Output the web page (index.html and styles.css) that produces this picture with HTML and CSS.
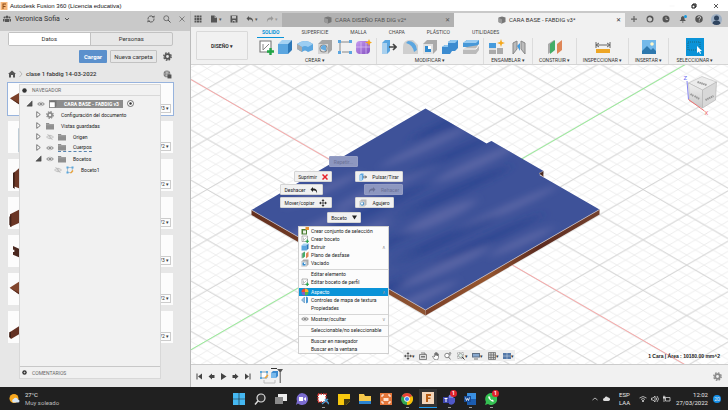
FILE: index.html
```html
<!DOCTYPE html>
<html lang="es">
<head>
<meta charset="utf-8">
<title>Autodesk Fusion 360</title>
<link rel="stylesheet" href="styles.css">
</head>
<body>
<svg class="defs" aria-hidden="true">
  <defs>
    <linearGradient id="purple" x1="0" y1="0" x2="1" y2="1"><stop offset="0" stop-color="#c79af0"/><stop offset="1" stop-color="#8450c0"/></linearGradient>
    <symbol id="gear" viewBox="0 0 16 16"><circle cx="8" cy="8" r="4.2" fill="none" stroke="currentColor" stroke-width="3.4"/><circle cx="8" cy="8" r="6.6" fill="none" stroke="currentColor" stroke-width="2.4" stroke-dasharray="2.9 2.28"/></symbol>
    <symbol id="eye" viewBox="0 0 16 16"><path d="M0 8Q8-1 16 8Q8 17 0 8Z" fill="#a2a2a2"/><circle cx="8" cy="8" r="3.4" fill="#f1f1f1"/><circle cx="8" cy="8" r="2.2" fill="#777"/></symbol>
    <symbol id="eye-off" viewBox="0 0 16 16"><path d="M1 8Q8 1 15 8Q8 15 1 8ZM3 2l10 12" fill="none" stroke="#b5b5b5" stroke-width="1.5"/><circle cx="8" cy="8" r="2.4" fill="none" stroke="#b5b5b5" stroke-width="1.3"/></symbol>
    <symbol id="folder" viewBox="0 0 16 16"><path d="M0 2h6l1 2h9v11H0z" fill="#8f8f8f"/><path d="M0 5.500h16" stroke="#b9b9b9"/></symbol>
    <symbol id="closed" viewBox="0 0 16 16"><path d="M4 1.500L12 8L4 14.500Z" fill="#fff" stroke="#444" stroke-width="1.6"/></symbol>
    <symbol id="open" viewBox="0 0 16 16"><path d="M14 2V14H2Z" fill="#555" stroke="#333"/></symbol>
    <symbol id="cube" viewBox="0 0 16 16"><path d="M1 3L8 1l7 2v9l-7 3-7-3z" fill="#777"/><path d="M8 6.500v9l-7-3V4z" fill="#999"/></symbol>
    <symbol id="box" viewBox="0 0 16 16"><path d="M1 5L5 1h10l-4 4z" fill="#a5d2f3"/><path d="M1 5h10v10H1z" fill="#5ba6e0"/><path d="M11 5l4-4v10l-4 4z" fill="#2d78b8"/></symbol>
    <symbol id="sketch" viewBox="0 0 16 16"><path d="M2 2H13V13H2Z" fill="#fff" stroke="#777" stroke-width="1.1"/><path d="M5 5v6l6-6" fill="none" stroke="#888"/><path d="M12.500 9v7M9 12.500h7" stroke="#22a547" stroke-width="2.4"/></symbol>
    <symbol id="sketch-edit" viewBox="0 0 16 16"><path d="M3 3H13L12 13H3Z" fill="none" stroke="#7c9ab0" stroke-width="1.1"/><path d="M1 1h4v4H1zM11 1h4v4h-4zM1 11h4v4H1z" fill="#58a8df"/><path d="M8 14l5-6 2 2-5 5z" fill="#f1a22e"/></symbol>
    <symbol id="undo" viewBox="0 0 16 16"><path d="M6 2L1 7l5 5V9c5-1 7 1 8 6C15 8 12 5 6 5Z" fill="currentColor"/></symbol>
    <symbol id="pushpull" viewBox="0 0 16 16"><path d="M1 4L4 1h5v11l-3 3H1z" fill="#5ba6e0"/><path d="M1 4h5v11H1z" fill="#a9d0ee"/><path d="M8 8h7M12 5l3 3-3 3" fill="none" stroke="#444" stroke-width="1.6"/></symbol>
    <symbol id="hole" viewBox="0 0 16 16"><path d="M1 5L5 1h10v10l-4 4H1z" fill="#b7b7b7"/><path d="M1 5h10v10H1z" fill="#dedede"/><circle cx="6.500" cy="9.500" r="4" fill="#4d93c8"/><circle cx="6" cy="9" r="2.300" fill="#eef6fc"/></symbol>
    <symbol id="planes" viewBox="0 0 16 16"><path d="M1 5l6-4v10l-6 4z" fill="#aaa"/><path d="M3 5l5-4v10l-5 4z" fill="#44ad68"/><path d="M10 5l5-4v10l-5 4z" fill="#df8657"/></symbol>
    <symbol id="shell" viewBox="0 0 16 16"><path d="M1 5L5 1h10v10l-4 4H1z" fill="#aaa"/><path d="M1 5h10v10H1z" fill="#e2e2e2"/><path d="M3 7h6v6H3z" fill="#318bd0"/><path d="M6 7h3v3H6z" fill="#fff"/></symbol>
  </defs>
</svg>

<header class="titlebar">
  <svg class="i8" viewBox="0 0 16 16"><path d="M1 0h14v16H1z" fill="#f6b77a"/><path d="M5 3h7v2H7v3h4v2H7v4H5z" fill="#8a4a16"/></svg>
  <span class="title">Autodesk Fusion 360 (Licencia educativa)</span>
  <button class="win" aria-label="Minimizar"><svg class="i6" viewBox="0 0 12 12"><path d="M1 6h10" stroke="#eee"/></svg></button>
  <button class="win" aria-label="Restaurar"><svg class="i6" viewBox="0 0 12 12"><path d="M2 4h6v6H2zM4 4V2h6v6H8" fill="none" stroke="#111" stroke-width="2"/></svg></button>
  <button class="win" aria-label="Cerrar"><svg class="i6" viewBox="0 0 12 12"><path d="M2 2l8 8M10 2l-8 8" stroke="#222" stroke-width="1.500"/></svg></button>
</header>

<div class="workspace">
  <aside class="data">
    <div class="user">
      <svg class="i8" viewBox="0 0 16 16"><g fill="#555"><circle cx="8" cy="4" r="3"/><circle cx="3" cy="5" r="2"/><circle cx="13" cy="5" r="2"/><path d="M4 14V8h8v6zM0 13V8h3v5zM13 8h3v5h-3z"/></g></svg>
      <span>Veronica Sofia</span>
      <svg class="i6" viewBox="0 0 12 12"><path d="M2 4l4 4 4-4" fill="none" stroke="#555" stroke-width="2"/></svg>
      <span class="grow"></span>
      <button class="plain" aria-label="Actualizar"><svg class="i8" viewBox="0 0 16 16"><path d="M2 9A6 6 0 0 1 12 3.500M14 7A6 6 0 0 1 4 12.500" fill="none" stroke="#444" stroke-width="1.600"/><path d="M10 5h5V1zM6 11H1v4z" fill="#444"/></svg></button>
      <button class="plain" aria-label="Buscar"><svg class="i8" viewBox="0 0 16 16"><circle cx="6.500" cy="6.500" r="5" fill="none" stroke="#555" stroke-width="1.500"/><path d="M10 10l5 5" stroke="#555" stroke-width="2"/></svg></button>
      <button class="plain" aria-label="Cerrar panel"><svg class="i6" viewBox="0 0 12 12"><path d="M1 1l10 10M11 1L1 11" stroke="#666" stroke-width="1.500"/></svg></button>
    </div>
    <div class="segments"><button class="on">Datos</button><button>Personas</button></div>
    <div class="actions">
      <button class="primary">Cargar</button><button class="secondary">Nueva carpeta</button>
      <button class="plain" aria-label="Ajustes"><svg class="i9"><use href="#gear"/></svg></button>
    </div>
    <div class="crumbs">
      <svg class="i8" viewBox="0 0 16 16"><path d="M8 1L0 8h2v7h4v-5h4v5h4V8h2z" fill="#555"/></svg>
      <svg class="i6" viewBox="0 0 12 12"><path d="M3 0l5 6-5 6" fill="none" stroke="#aaa" stroke-width="1.500"/></svg>
      <span>clase 1 fabdig 14-03-2022</span><span class="grow"></span>
      <svg class="i9" viewBox="0 0 16 16"><circle cx="7" cy="7" r="6" fill="#777"/><path d="M1 7h12M7 1v12M3 3q4 3 8 0M3 11q4-3 8 0" stroke="#ddd" fill="none"/><path d="M8 8h7v7H8z" fill="#555"/></svg>
    </div>
    <ul class="cards">
      <li class="sel"><svg viewBox="0 0 33 96"><path d="M6 46L33 30V64z" fill="#7a4029"/><path d="M6 46l27 14v4z" fill="#4a2418"/></svg><button>V3 ▾</button></li>
      <li><svg viewBox="0 0 33 96"><path d="M31 22h2v72h-2z" fill="#9fb4c4"/></svg><button>V2 ▾</button></li>
      <li><svg viewBox="0 0 33 96"><path d="M17 42l16-14v60l-16-6z" fill="#6b3625"/><path d="M15 42l5-4v52l-5-5z" fill="#3e2018"/></svg><button>V2 ▾</button></li>
      <li><svg viewBox="0 0 33 96"><path d="M6 52L33 38V78L6 90z" fill="#6b3625"/><path d="M4 60l6-9v40l-6-8z" fill="#43221a"/></svg><button>V2 ▾</button></li>
      <li><svg viewBox="0 0 33 96"><path d="M15 33l18 8v26l-18-8v-8h4v-7h-4z" fill="#4b281f"/></svg><button>V3 ▾</button></li>
      <li><svg viewBox="0 0 33 96"><path d="M5 44L33 26V64z" fill="#81462e"/><path d="M5 44l28 15v5z" fill="#55291c"/></svg><button>V2 ▾</button></li>
      <li><svg viewBox="0 0 33 96"><path d="M5 64L33 46V70L9 84l-5-6z" fill="#633123"/><path d="M4 64l5-2v20l-5-4z" fill="#3e2018"/></svg><button>V2 ▾</button></li>
    </ul>

    <section class="browser">
      <h2><svg class="i5" viewBox="0 0 10 10"><circle cx="5" cy="5" r="4.500" fill="#333"/></svg>NAVEGADOR</h2>
      <div class="row l0"><svg class="i7"><use href="#open"/></svg><svg class="i8"><use href="#eye"/></svg><span class="root"><svg class="i8" viewBox="0 0 16 16"><path d="M1 4l3-3h11v11l-3 3H1z" fill="#777"/><path d="M1 4h11v11H1z" fill="#fff" stroke="#666"/></svg>CARA BASE - FABDIG v3</span><svg class="i7" viewBox="0 0 14 14"><circle cx="7" cy="7" r="6" fill="#fff" stroke="#444" stroke-width="1.500"/><circle cx="7" cy="7" r="2.500" fill="#333"/></svg></div>
      <div class="row l1"><svg class="i7"><use href="#closed"/></svg><svg class="i8 dim"><use href="#gear"/></svg><span class="lbl">Configuración del documento</span></div>
      <div class="row l1"><svg class="i7"><use href="#closed"/></svg><svg class="i8"><use href="#folder"/></svg><span class="lbl">Vistas guardadas</span></div>
      <div class="row l1"><svg class="i7"><use href="#closed"/></svg><svg class="i8"><use href="#eye-off"/></svg><svg class="i8"><use href="#folder"/></svg><span class="lbl">Origen</span></div>
      <div class="row l1"><svg class="i7"><use href="#closed"/></svg><svg class="i8"><use href="#eye"/></svg><span class="dashed"><svg class="i8"><use href="#folder"/></svg><span class="lbl">Cuerpos</span></span></div>
      <div class="row l1"><svg class="i7"><use href="#open"/></svg><svg class="i8"><use href="#eye"/></svg><svg class="i8"><use href="#folder"/></svg><span class="lbl">Bocetos</span></div>
      <div class="row l2"><svg class="i8"><use href="#eye-off"/></svg><svg class="i8"><use href="#sketch-edit"/></svg><span class="lbl">Boceto1</span></div>
      <h2 class="comments"><svg class="i5" viewBox="0 0 10 10"><circle cx="5" cy="5" r="4.500" fill="#333"/><path d="M3 5h4M5 3v4" stroke="#fff"/></svg>COMENTARIOS</h2>
    </section>
  </aside>

  <main class="design">
    <div class="docbar">
      <div class="quick">
        <svg class="i8" viewBox="0 0 16 16"><path d="M3 1v14M8 1v14M13 1v14" stroke="#555" stroke-width="4" stroke-dasharray="4 1"/></svg>
        <span><svg class="i8" viewBox="0 0 16 16"><path d="M2 1h7l5 5v9H2z" fill="#555"/><path d="M9 1v5h5" fill="#aaa"/></svg>▾</span>
        <svg class="i8" viewBox="0 0 16 16"><path d="M1 1h14v14H1z" fill="#555"/><path d="M4 2h8v5H4zM5 10h6v5H5z" fill="#c4c4c4"/><path d="M6 12h3v3H6z" fill="#555"/></svg>
        <span><svg class="i8"><use href="#undo"/></svg>▾</span>
        <span class="off"><svg class="i8 flip"><use href="#undo"/></svg>▾</span>
      </div>
      <div class="doc"><span class="name"><svg class="i8"><use href="#cube"/></svg>CARA DISEÑO FAB DIG v2*</span><button class="plain" aria-label="Cerrar documento">✕</button></div>
      <div class="doc active"><span class="name"><svg class="i8"><use href="#cube"/></svg>CARA BASE - FABDIG v3*</span><button class="plain" aria-label="Cerrar documento">✕</button></div>
      <div class="tools">
        <svg class="i8" viewBox="0 0 16 16"><path d="M8 2v12M2 8h12" stroke="#666" stroke-width="2.500"/></svg>
        <svg class="i8" viewBox="0 0 16 16"><circle cx="8" cy="8" r="7" fill="#555"/><path d="M5 5a4.500 4.500 0 1 0 7 2L8 4z" fill="#ccc"/></svg>
        <svg class="i8" viewBox="0 0 16 16"><circle cx="8" cy="8" r="7" fill="#555"/><path d="M8 4v5h4" stroke="#ccc" stroke-width="1.500" fill="none"/></svg>
        <svg class="i8" viewBox="0 0 16 16"><path d="M1 12l3-3V5q4-6 7 0v4l3 3zM6 13h3v2H6z" fill="#555"/><circle cx="13" cy="3" r="3" fill="#169ae0"/></svg>
        <svg class="i8" viewBox="0 0 16 16"><circle cx="8" cy="8" r="7.500" fill="#555"/><path d="M5.500 6q0-3 3-3t2.500 3q0 1-2.500 3v1M8.500 11v2" stroke="#ddd" stroke-width="1.700" fill="none"/></svg>
        <svg class="i11" viewBox="0 0 22 22"><circle cx="11" cy="11" r="11" fill="#9fb0c4"/><circle cx="11" cy="8" r="5" fill="#30455f"/><path d="M3 19q1-6 8-6t8 6q-8 6-16 0z" fill="#30455f"/></svg>
      </div>
    </div>

    <div class="ribbon">
      <button class="mode">DISEÑO ▾</button>
      <div class="panels">
        <nav class="tabs"><a href="#" class="on">SOLIDO</a><a href="#">SUPERFICIE</a><a href="#">MALLA</a><a href="#">CHAPA</a><a href="#">PLÁSTICO</a><a href="#">UTILIDADES</a></nav>
        <div class="groups">
          <div class="group"><div class="icons">
            <svg><use href="#sketch"/></svg><svg><use href="#box"/></svg>
            <svg viewBox="0 0 16 16"><path d="M0 5Q8-1 16 5v6l-5 2q-3-3-6 0L0 10z" fill="#5ba6e0"/><path d="M0 5Q8-1 16 5l-5 3q-3-2-6 0z" fill="#9bcdf2"/><path d="M0 5l5 3v5l-5-3z" fill="#aaa"/></svg>
            <svg viewBox="0 0 16 16"><path d="M1 5L5 1h10v10l-4 4H1z" fill="#a5a5a5"/><path d="M1 5h10v10H1z" fill="#d5d5d5"/><circle cx="6.500" cy="9.500" r="4" fill="#888"/><circle cx="6.500" cy="9.500" r="3" fill="#e6e6e6"/><path d="M4 10a3 3 0 0 1 5-3v5z" fill="#65abe0"/></svg>
            <svg viewBox="0 0 16 16"><path d="M3 13V3H13M5 13h8" stroke="#888" fill="none"/><path d="M1 1h3v3H1zM12 1h3v3h-3zM1 12h3v3H1zM12 12h3v3h-3z" fill="#5ba6e0"/></svg>
            <svg viewBox="0 0 16 16"><rect y="2" width="14" height="13" rx="4" fill="url(#purple)"/><path d="M0 8h14M5 3v12M10 3v12" stroke="#dcc4f5" stroke-width=".7"/><path d="M13 0l1 2.500 2 1-2 1-1 2.500-1-2.500-3-1 3-1z" fill="#f5a81c"/></svg>
          </div><button>CREAR ▾</button></div>
          <div class="group"><div class="icons">
            <svg><use href="#pushpull"/></svg>
            <svg viewBox="0 0 16 16"><path d="M1 15V8q0-7 7-7h3l5 5v9z" fill="#cfcfcf"/><path d="M6 2q8 0 9 9l-3 2Q11 6 4 4z" fill="#5ba6e0"/></svg>
            <svg><use href="#shell"/></svg>
            <svg viewBox="0 0 16 16"><path d="M0 8l3-2h3V3l3-2h7v8l-3 3h-3l-2 3H0z" fill="#3c8bd0"/><path d="M0 8h6V4h7l3-3H9L6 3v3H3z" fill="#8fc7f0"/></svg>
            <svg viewBox="0 0 16 16"><path d="M0 4l4-3h12v4l-3 3H0z" fill="#4798d8"/><path d="M0 4l4-3h12l-3 3z" fill="#99cbf1"/><path d="M0 10l4-2 12-2v5l-3 4H0z" fill="#bbb"/><path d="M0 10h13l3-4" stroke="#fff" fill="none"/></svg>
          </div><button>MODIFICAR ▾</button></div>
          <div class="group"><div class="icons">
            <svg viewBox="0 0 16 16"><path d="M0 4h7v5H0z" fill="#469bdd"/><path d="M0 9h7v6H0zM8 9h6v6H8z" fill="#aaa"/><path d="M0 9h7v2H0z" fill="#ddd"/><path d="M12 0l1 3 3 1-3 1-1 3-1-3-3-1 3-1z" fill="#f5a81c"/></svg>
            <svg viewBox="0 0 16 16"><path d="M2 4l4-2v8l-4 5zM10 2l4 2v11l-4-5z" fill="#bbb" stroke="#888"/><path d="M6 7l3-3v8z" fill="#469bdd"/></svg>
          </div><button>ENSAMBLAR ▾</button></div>
          <div class="group"><div class="icons"><svg><use href="#planes"/></svg></div><button>CONSTRUIR ▾</button></div>
          <div class="group"><div class="icons"><svg viewBox="0 0 16 16"><path d="M1 3v6M15 3v6M1 6h14M4 4L1 6l3 2M12 4l3 2-3 2" stroke="#666" fill="none"/><path d="M1 10h14v4H1z" fill="#eda626"/></svg></div><button>INSPECCIONAR ▾</button></div>
          <div class="group"><div class="icons"><svg viewBox="0 0 16 16"><path d="M1 1h14v14H1z" fill="#74b9ea"/><path d="M1 12l5-5 4 4 2-2 3 3v3H1z" fill="#2d77ad"/><circle cx="11" cy="5" r="1.800" fill="#fff6c8"/></svg></div><button>INSERTAR ▾</button></div>
          <div class="group"><div class="icons"><svg class="big" viewBox="0 0 18 18"><path d="M0 0h18v18H0z" fill="#0a93d8"/><path d="M2 4h12v8H2z" fill="none" stroke="#1c5d6b" stroke-width=".8" stroke-dasharray="1 1"/><path d="M11 8v7l2-1.500 1 2.500 1-.5-1-2.500h2z" fill="#fff"/></svg></div><button>SELECCIONAR ▾</button></div>
        </div>
      </div>
    </div>

    <div class="canvas">
      <svg class="scene" viewBox="190 65 538 299" preserveAspectRatio="xMidYMid slice">
        <defs>
          <pattern id="minor" patternUnits="userSpaceOnUse" x="424.6" y="214.7" width="17.44" height="10.08"><path d="M0 0L17.44 10.08M0 10.08L17.44 0" stroke="#e9e9e9" stroke-width=".8"/></pattern>
          <pattern id="major" patternUnits="userSpaceOnUse" x="424.6" y="214.7" width="87.2" height="50.4"><path d="M0 0L87.2 50.400M0 50.400L87.2 0" stroke="#ccc" stroke-width=".8"/></pattern>
          <linearGradient id="edgeR"><stop offset="0" stop-color="#7a3f28"/><stop offset=".35" stop-color="#96562f"/><stop offset=".65" stop-color="#5c2b20"/><stop offset="1" stop-color="#74412e"/></linearGradient>
          <linearGradient id="edgeL"><stop offset="0" stop-color="#64301f"/><stop offset="1" stop-color="#8f5432"/></linearGradient>
          <clipPath id="top"><path d="M425 108.500L486 143.500L491 141L543 171V174L539 175L599 209.500L425 310L251 210Z"/></clipPath>
          <filter id="soft" x="-50%" y="-100%" width="200%" height="300%"><feGaussianBlur stdDeviation="6 3"/></filter>
          <linearGradient id="cubeL" x2="0" y2="1"><stop stop-color="#f0f0f0"/><stop offset="1" stop-color="#c9c9c9"/></linearGradient>
        </defs>
        <path d="M190 65h538v299H190z" fill="#fff"/>
        <path d="M190 65h538v299H190z" fill="url(#minor)"/>
        <path d="M190 65h538v299H190z" fill="url(#major)"/>
        <path d="M190 79.300L728 389.700" stroke="#ff9a9a" stroke-width=".8"/>
        <path d="M190 350L728 39.600" stroke="#86f286" stroke-width=".8"/>
        <path d="M251 210L425 310V315.500L251 215Z" fill="url(#edgeL)"/>
        <path d="M599 209.500L425 310V315.500L599 214.500Z" fill="url(#edgeR)"/>
        <g clip-path="url(#top)">
          <path d="M240 100h370v220H240z" fill="#3e5299"/>
          <g transform="rotate(-24 425 210)" filter="url(#soft)">
            <g fill="#7077b0" opacity=".5">
              <ellipse cx="450" cy="152" rx="48" ry="4"/><ellipse cx="400" cy="172" rx="60" ry="5"/><ellipse cx="490" cy="188" rx="45" ry="5"/><ellipse cx="370" cy="205" rx="55" ry="4"/><ellipse cx="435" cy="222" rx="40" ry="6"/><ellipse cx="500" cy="242" rx="55" ry="4"/><ellipse cx="350" cy="245" rx="50" ry="5"/><ellipse cx="420" cy="270" rx="48" ry="5"/><ellipse cx="380" cy="288" rx="45" ry="4"/><ellipse cx="320" cy="180" rx="40" ry="4"/><ellipse cx="500" cy="278" rx="35" ry="4"/><ellipse cx="340" cy="150" rx="40" ry="4"/>
            </g>
            <g fill="#27428e" opacity=".6">
              <ellipse cx="470" cy="170" rx="60" ry="4"/><ellipse cx="380" cy="188" rx="60" ry="4"/><ellipse cx="450" cy="205" rx="70" ry="5"/><ellipse cx="350" cy="225" rx="60" ry="4"/><ellipse cx="420" cy="245" rx="70" ry="5"/><ellipse cx="470" cy="262" rx="60" ry="4"/><ellipse cx="340" cy="266" rx="40" ry="5"/><ellipse cx="490" cy="140" rx="50" ry="5"/>
            </g>
          </g>
        </g>
        <path d="M538.500 173.500l4.500-2.500v6z" fill="#4a2a1e" stroke="#d5c4bb" stroke-width=".5"/>
        <path d="M251 210L425 310L599 209.500" fill="none" stroke="#c8bdbf" stroke-width=".8"/>
        <g>
          <path d="M688 83l13.500-6.500L716 82l-14 8z" fill="#ececec" stroke="#bbb" stroke-width=".6"/>
          <path d="M688 83l14 7v18l-13-7z" fill="url(#cubeL)" stroke="#b5b5b5" stroke-width=".6"/>
          <path d="M702 90l14-8-1 18-13 8z" fill="#d8d8d8" stroke="#b0b0b0" stroke-width=".6"/>
          <path d="M690 94l3 2M694 96l5 3M705 100l8-4M697 82l9 3" stroke="#999" stroke-width="2" stroke-dasharray="1.500 .5"/>
          <path d="M686.500 81L688 99.500" stroke="#8484f0"/><path d="M688 99.500L704 111" stroke="#ef7070"/>
          <text x="683" y="80" class="axis" fill="#7070f0">Z</text><text x="704" y="115" class="axis" fill="#f07070">X</text>
        </g>
      </svg>

      <button class="mark repetir ghost">Repetir...</button>
      <button class="mark suprimir">Suprimir <svg class="i6" viewBox="0 0 12 12"><path d="M1 1l10 10M11 1L1 11" stroke="#e8222a" stroke-width="3"/></svg></button>
      <button class="mark pulsar"><svg class="i8"><use href="#pushpull"/></svg> Pulsar/Tirar</button>
      <button class="mark deshacer">Deshacer <svg class="i8"><use href="#undo"/></svg></button>
      <button class="mark rehacer ghost"><svg class="i8 flip"><use href="#undo"/></svg> Rehacer</button>
      <button class="mark mover">Mover/copiar <svg class="i8" viewBox="0 0 16 16"><path d="M8 2v12M2 8h12" stroke="#333" stroke-width="1.500"/><path d="M5 4l3-4 3 4zM5 12l3 4 3-4zM4 5L0 8l4 3zM12 5l4 3-4 3z" fill="#333"/></svg></button>
      <button class="mark agujero"><svg class="i8"><use href="#hole"/></svg> Agujero</button>
      <button class="mark boceto">Boceto <svg class="i5" viewBox="0 0 10 10"><path d="M0 1h10L5 9z" fill="#222"/></svg></button>

      <menu class="context">
        <li><svg class="i8" viewBox="0 0 16 16"><path d="M1 4h11v11H1z" fill="#4a7c32"/><path d="M4 7h6v6H4z" fill="#e9efe4"/><path d="M9 0h7v6H9z" fill="#e89432"/></svg><button>Crear conjunto de selección</button></li>
        <li><svg class="i8"><use href="#sketch"/></svg><button>Crear boceto</button></li>
        <li><svg class="i8"><use href="#box"/></svg><button>Extruir</button><i>∧</i></li>
        <li><svg class="i8"><use href="#planes"/></svg><button>Plano de desfase</button></li>
        <li><svg class="i8"><use href="#shell"/></svg><button>Vaciado</button></li>
        <li class="line"><button>Editar elemento</button></li>
        <li><svg class="i8"><use href="#sketch"/></svg><button>Editar boceto de perfil</button></li>
        <li class="hot"><svg class="i8" viewBox="0 0 16 16"><path d="M8 8V1a7 7 0 0 1 7 7z" fill="#f7b52a"/><path d="M8 8h7a7 7 0 0 1-7 7z" fill="#58b947"/><path d="M8 8v7a7 7 0 0 1-7-7z" fill="#7d62c8"/><path d="M8 8H1a7 7 0 0 1 7-7z" fill="#ec4a3a"/></svg><button>Aspecto</button><i>∧</i></li>
        <li><svg class="i8" viewBox="0 0 16 16"><path d="M1 8l6-6v12z" fill="#90bee2" stroke="#4382b5"/><path d="M10 1l4 2v10l-4 2z" fill="#4a96d2"/></svg><button>Controles de mapa de textura</button></li>
        <li><button>Propiedades</button></li>
        <li class="line"><svg class="i8"><use href="#eye"/></svg><button>Mostrar/ocultar</button><i>∨</i></li>
        <li class="line"><button>Seleccionable/no seleccionable</button></li>
        <li class="line"><button>Buscar en navegador</button></li>
        <li><button>Buscar en la ventana</button></li>
      </menu>

      <div class="viewbar">
        <span><svg class="i8" viewBox="0 0 16 16"><path d="M8 2v12M1 8h14" stroke="#555" stroke-width="1.500"/><path d="M5 4l3-4 3 4zM5 12l3 4 3-4zM4 5L0 8l4 3zM12 5l4 3-4 3z" fill="#555"/></svg>▾</span>
        <svg class="i8" viewBox="0 0 16 16"><path d="M1 5h14v10H1zM4 2h8v3" fill="#ddd" stroke="#666" stroke-width="1.500"/><path d="M4 8h8v3H4z" fill="#777"/></svg>
        <svg class="i8" viewBox="0 0 16 16"><path d="M5 15L1 9l2-1 2 2V3h2v4-6h2v6-5h2v6-4h2v7l-2 5z" fill="#fff" stroke="#555" stroke-width="1.200"/></svg>
        <svg class="i8" viewBox="0 0 16 16"><circle cx="6" cy="7" r="4.500" fill="#fff" stroke="#666" stroke-width="1.500"/><path d="M9 10l4 5M12 1v6M10 3l2-2 2 2" stroke="#555" stroke-width="1.500" fill="none"/></svg>
        <span><svg class="i8" viewBox="0 0 16 16"><path d="M1 1h12v12H1z" fill="none" stroke="#777" stroke-dasharray="2 1"/><circle cx="7" cy="7" r="4" fill="#dfeee8" stroke="#666"/><path d="M10 10l5 5" stroke="#444" stroke-width="2"/></svg>▾</span>
        <span><svg class="i8" viewBox="0 0 16 16"><path d="M0 2h16v9H0z" fill="#5d6f86"/><path d="M2 4h12v5H2z" fill="#88a9d0"/><path d="M4 13h8v2H4z" fill="#777"/></svg>▾</span>
        <span><svg class="i8" viewBox="0 0 16 16"><path d="M1 1h14v14H1z" fill="#ccc"/><path d="M1 1h14v14H1zM6 1v14M11 1v14M1 6h14M1 11h14" fill="none" stroke="#666" stroke-width="1.400"/></svg>▾</span>
        <span><svg class="i8" viewBox="0 0 16 16"><path d="M0 2h16v12H0z" fill="#5478a8"/><path d="M8 2v12M0 8h16" stroke="#d6e1ee"/></svg>▾</span>
      </div>
      <div class="area">1 Cara | Área : 10180.00 mm^2</div>
    </div>

    <div class="timeline">
      <button class="plain" aria-label="Inicio"><svg class="i7" viewBox="0 0 14 14"><path d="M2 1v12" stroke="#444" stroke-width="2"/><path d="M12 1v12L4 7z" fill="#444"/></svg></button>
      <button class="plain" aria-label="Anterior"><svg class="i7" viewBox="0 0 14 14"><path d="M8 1v12L1 7zM8 4h5v6H8z" fill="#444"/></svg></button>
      <button class="plain" aria-label="Reproducir"><svg class="i7" viewBox="0 0 14 14"><path d="M2 0v14l11-7z" fill="#444"/></svg></button>
      <button class="plain" aria-label="Siguiente"><svg class="i7" viewBox="0 0 14 14"><path d="M6 1v12l7-6zM1 4h5v6H1z" fill="#444"/></svg></button>
      <button class="plain" aria-label="Final"><svg class="i7" viewBox="0 0 14 14"><path d="M12 1v12" stroke="#444" stroke-width="2"/><path d="M2 1v12l8-6z" fill="#444"/></svg></button>
      <svg class="feat" viewBox="0 0 26 18"><path d="M2 5h6v6H2z" fill="#fff" stroke="#7c9ab0"/><path d="M1 4h2v2H1zM7 4h2v2H7zM1 10h2v2H1z" fill="#58a8df"/><path d="M6 11l3-3" stroke="#f1a22e" stroke-width="1.500"/><path d="M12 6l2-2h5v5l-2 2h-5z" fill="#3c8bd0"/><path d="M12 6h5v5h-5z" fill="#79b9eb"/><path d="M12 2l1-1 1 1 1-1 1 1 1-1 1 1" stroke="#333" fill="none"/><path d="M18 2h6l-2 3h-.3v11h-1V5z" fill="#555"/><path d="M5 13v3h11v-3" fill="none" stroke="#bbb"/></svg>
      <span class="grow"></span>
      <svg class="i9 dim"><use href="#gear"/></svg>
    </div>
  </main>
</div>

<footer class="taskbar">
  <div class="weather"><svg class="i11" viewBox="0 0 22 22"><circle cx="10" cy="11" r="9" fill="#f7a71e"/><path d="M8 19a4 4 0 0 1 1-7 5 5 0 0 1 9 1 3 3 0 0 1 0 6z" fill="#d7e6f5"/></svg><div>27°C<br><span>Muy soleado</span></div></div>
  <div class="apps">
    <svg viewBox="0 0 12 12"><path d="M0 0h5.700v5.700H0zM6.300 0H12v5.700H6.300zM0 6.300h5.700V12H0zM6.300 6.300H12V12H6.300z" fill="#45b8f2"/></svg>
    <svg viewBox="0 0 12 12"><circle cx="7" cy="5" r="4" fill="#333" stroke="#ddd" stroke-width="1.200"/><path d="M4 8l-3 3.500" stroke="#ddd" stroke-width="1.500"/></svg>
    <svg viewBox="0 0 12 12"><path d="M3 1h9v7H3z" fill="#eee"/><path d="M0 4h8v7H0z" fill="#8a8a8a"/></svg>
    <svg viewBox="0 0 12 12"><path d="M6 0a6 6 0 1 1-4 10.500L0 12l1-4A6 6 0 0 1 6 0z" fill="#7b6cd0"/><path d="M3 4h4v4H3zM7.500 6L10 4v4z" fill="#fff"/></svg>
    <span class="run"><svg viewBox="0 0 12 12"><path d="M1 1h8v8H1z" fill="#fff" stroke="#d8322d" stroke-width="1.500" stroke-dasharray="1.500 1"/><path d="M5 11l6-5M8 6l4 5" stroke="#4b9bd0" stroke-width="1.500"/></svg></span>
    <svg viewBox="0 0 12 12"><path d="M0 1h12v7l-4 4H0z" fill="#f7c80e"/><path d="M6 6h6v2l-4 4H6z" fill="#433a10"/></svg>
    <svg viewBox="0 0 12 12"><path d="M0 1h5l1 2h6v8H0z" fill="#f6c84b"/><path d="M0 8h12v3H0z" fill="#2b83cf"/></svg>
    <svg viewBox="0 0 12 12"><path d="M0 0h12v12H0z" fill="#e3763a"/><path d="M2 4V2h2M8 2h2v2M10 8v2H8M4 10H2V8" stroke="#fff" fill="none"/><path d="M3.500 5h5v3h-5z" fill="#ffe2cf"/></svg>
    <span class="run"><svg viewBox="0 0 12 12"><circle cx="6" cy="6" r="6" fill="#34a853"/><path d="M6 6L.8 3A6 6 0 0 1 11.200 3z" fill="#ea4335"/><path d="M6 6l5.200-3A6 6 0 0 1 6 12z" fill="#fbbc05"/><circle cx="6" cy="6" r="2.800" fill="#fff"/><circle cx="6" cy="6" r="2.100" fill="#4285f4"/></svg></span>
    <span class="current"><svg viewBox="0 0 12 12"><path d="M0 0h12v12H0z" fill="#f3d5b8"/><path d="M4 2h5v2H6v1.500h2.500v1.500H6V10H4z" fill="#b75d14"/></svg></span>
    <span class="run"><svg viewBox="0 0 12 12"><circle cx="8" cy="4" r="2.500" fill="#7b83eb"/><path d="M5 5h7v4q-2 4-6 2z" fill="#5059c9"/><path d="M0 4h6v6H0z" fill="#3d46ad"/><path d="M1.500 5.500h3M3 5.500V9" stroke="#fff"/></svg><b>1</b></span>
    <span class="run"><svg viewBox="0 0 12 12"><path d="M3 0h9v12H3z" fill="#3a8fe0"/><path d="M3 6h9v6H3z" fill="#1b5cb0"/><path d="M0 3h7v6H0z" fill="#174a94"/><path d="M1.500 4.500l1 3 1-2 1 2 1-3" fill="none" stroke="#fff" stroke-width=".8"/></svg></span>
    <span class="run"><svg viewBox="0 0 12 12"><path d="M6 0a6 6 0 1 1-3 11L0 12l1-3A6 6 0 0 1 6 0z" fill="#35c052"/><path d="M4 3q-2 1 1 4t4 1l-1.500-1.500-1 .5-1.500-2 .5-.5z" fill="#fff"/></svg><b>1</b></span>
  </div>
  <div class="tray">
    <svg class="i6" viewBox="0 0 12 12"><path d="M1 8l5-4 5 4" fill="none" stroke="#ddd" stroke-width="1.500"/></svg>
    <svg class="i7" viewBox="0 0 14 14"><path d="M3 12a3 3 0 0 1 0-6q3-5 7-1a3.500 3.500 0 0 1 1 7z" fill="#ddd"/></svg>
    <div class="mid">ESP<br>LAA</div>
    <div class="status"><svg class="i8" viewBox="0 0 16 16"><path d="M1 6q7-6 14 0M4 9q4-4 8 0" fill="none" stroke="#ddd" stroke-width="1.500"/><circle cx="8" cy="12" r="2" fill="#ddd"/></svg><svg class="i8" viewBox="0 0 16 16"><path d="M1 6h3l4-4v12l-4-4H1zM10 5q3 3 0 6M12 2q6 6 0 12" fill="none" stroke="#ddd" stroke-width="1.500"/></svg><svg class="i8" viewBox="0 0 16 16"><path d="M5 5h9v7H5zM2 1v5M2 6v8" fill="none" stroke="#ddd" stroke-width="1.500"/><path d="M0 3h5v4H0z" fill="#ddd"/></svg></div>
    <div class="clock">12:02<br>27/03/2022</div>
    <span class="count">20</span>
  </div>
</footer>
</body>
</html>
```
FILE: styles.css
```css
* { box-sizing: border-box; }
body {
  margin: 0;
  height: 100vh;
  display: flex;
  flex-direction: column;
  overflow: hidden;
  font: 5px/8px Roboto, "Liberation Sans", sans-serif;
  color: #333;
  background: #e7e7e7;
}
button { font: inherit; color: inherit; background: none; border: 0; padding: 0; margin: 0; white-space: nowrap; }
svg { flex: none; display: block; }
ul, menu { list-style: none; margin: 0; padding: 0; }
.defs { position: absolute; width: 0; height: 0; }
.i5 { width: 5px; height: 5px; }
.i6 { width: 6px; height: 6px; }
.i7 { width: 7px; height: 7px; }
.i8 { width: 8px; height: 8px; }
.i9 { width: 9px; height: 9px; }
.i11 { width: 11px; height: 11px; }
.grow { flex: 1; }
.dim { color: #8a8a8a; }
.flip { transform: scaleX(-1); }
.plain { display: flex; align-items: center; }

.titlebar { flex: none; height: 11px; display: flex; align-items: center; background: #fff; padding: 0 9px 0 0; }
.title { flex: 1; font-family: "Liberation Sans", sans-serif; font-size: 6px; color: #111; padding-left: 2px; }
.win { margin-left: 16px; }

.workspace { flex: 1; min-height: 0; display: flex; }

.data { position: relative; flex: none; width: 191px; border-right: 1px solid #bbb; background: #e7e7e7; }
.user { height: 20px; display: flex; align-items: center; gap: 4px; padding: 0 5px 4px 3px; background: #c9c9c9; font-size: 7px; }
.user .plain { margin-left: 4px; }
.segments { display: grid; grid-template-columns: 1fr 1fr; height: 14px; margin: 1px 17px 0 8px; border: 1px solid #c2c2c2; border-radius: 2px; font-size: 6px; }
.segments .on { background: #fff; border-right: 1px solid #c2c2c2; }
.actions { display: flex; justify-content: flex-end; gap: 3px; height: 13px; margin: 4px 18px 0 8px; font-size: 6px; }
.actions .plain { margin-left: 3px; color: #555; }
.primary { width: 28px; background: #5b90cc; color: #fff; font-weight: bold; border-radius: 1px; }
.secondary { width: 47px; border: 1px solid #c2c2c2; border-radius: 1px; }
.crumbs { display: flex; align-items: center; gap: 2px; height: 20px; margin: 1px 18px 0 8px; font-size: 6px; font-weight: 500; }
.cards { display: grid; gap: 6px; margin: -1px 17px 0 8px; }
.cards li { display: flex; justify-content: space-between; align-items: flex-end; height: 32px; background: #fcfcfc; }
.cards li svg { width: 11px; height: 32px; }
.cards li button { height: 9px; margin: 0 2px 2px; padding: 0 1px; border: 1px solid #ccc; line-height: 7px; }
.cards .sel { outline: 1px solid #97b3dd; }

.browser { position: absolute; left: 19px; top: 73px; bottom: 8px; width: 142px; display: flex; flex-direction: column; background: #f1f1f1; border: 1px solid #d8d8d8; }
.browser h2 { display: flex; align-items: center; gap: 5px; height: 11px; margin: 0 0 2px; padding-left: 2px; font-size: 5px; font-weight: 400; color: #666; border-bottom: 1px solid #d8d8d8; }
.browser .comments { height: 12px; margin: auto 0 0; border-top: 1px solid #c8c8c8; border-bottom: 0; }
.row { display: flex; align-items: center; gap: 4px; height: 11px; color: #222; }
.l0 { padding-left: 6px; }
.l1 { padding-left: 15px; }
.l2 { padding-left: 34px; }
.lbl { padding-left: 3px; }
.root { display: flex; align-items: center; gap: 7px; height: 8px; padding-right: 4px; background: #8d8d8d; color: #fff; font-weight: bold; }
.dashed { display: flex; align-items: center; gap: 4px; border-bottom: 1px dashed #5583b0; }

.design { flex: 1; min-width: 0; display: flex; flex-direction: column; }
.docbar { flex: none; height: 16px; display: flex; background: #c9c9c9; }
.quick { flex: none; width: 91px; display: flex; align-items: center; justify-content: space-between; padding: 0 4px 0 3px; color: #555; }
.quick span { display: flex; align-items: center; gap: 1px; }
.quick .off { color: #999; }
.doc { flex: 1; display: flex; align-items: center; margin-top: 2px; padding: 0 4px; background: #b1b1b1; color: #555; font-size: 6px; }
.name { flex: 1; display: flex; align-items: center; justify-content: center; gap: 3px; }
.active { background: #f1f1f1; color: #333; }
.tools { flex: none; width: 103px; display: flex; align-items: center; justify-content: space-between; padding: 0 6px 0 5px; }

.ribbon { flex: none; height: 38px; display: flex; padding: 0 7px 0 5px; background: #f1f1f1; border-bottom: 1px solid #d4d4d4; }
.mode { flex: none; width: 52px; height: 29px; margin: 4px 6px 0 0; border: 1px solid #d9d9d9; font-weight: bold; border-radius: 1px; }
.panels { flex: 1; min-width: 0; display: flex; flex-direction: column; }
.tabs { display: flex; gap: 12px; height: 11px; padding-left: 3px; }
.tabs a { color: #444; text-decoration: none; padding: 0 5px; line-height: 10px; }
.tabs .on { color: #0a93d8; font-weight: bold; border-bottom: 1px solid #0a93d8; }
.groups { flex: 1; display: grid; grid-template-columns: 123fr 107fr 49fr 44fr 52fr 40fr 52fr; }
.group { display: flex; flex-direction: column; align-items: center; min-width: 0; border-right: 1px solid #dcdcdc; }
.group:last-child { border: 0; }
.icons { align-self: stretch; display: flex; justify-content: space-evenly; align-items: center; height: 18px; }
.icons svg { width: 16px; height: 16px; }
.icons .big { width: 18px; height: 18px; }
.group button { line-height: 8px; }

.canvas { position: relative; flex: 1; min-height: 0; background: #fff; overflow: hidden; }
.scene { position: absolute; inset: 0; width: 100%; height: 100%; }
.axis { font: 6px Roboto, sans-serif; }

.mark { position: absolute; display: flex; align-items: center; justify-content: center; gap: 5px; height: 11px; background: #f1f1f1; border: 1px solid #d5d5d5; border-radius: 1px; color: #222; }
.ghost { background: #8d97c0; border-color: #949dc4; color: #6a7196; }
.repetir { left: 138px; top: 91px; width: 29px; }
.suprimir { left: 103px; top: 106px; width: 38px; }
.pulsar { left: 164px; top: 106px; width: 48px; }
.deshacer { left: 89px; top: 119px; width: 43px; }
.rehacer { left: 173px; top: 119px; width: 39px; }
.mover { left: 89px; top: 132px; width: 52px; }
.agujero { left: 164px; top: 132px; width: 39px; }
.boceto { left: 136px; top: 147px; width: 34px; }

.context { position: absolute; left: 107px; top: 161px; width: 91px; background: #fcfcfc; border: 1px solid #d0d0d0; color: #222; }
.context li { display: grid; grid-template-columns: 12px 1fr 6px; align-items: center; height: 8px; }
.context li svg { grid-column: 1; margin-left: 2px; }
.context button { grid-column: 2; text-align: left; line-height: 8px; }
.context i { font-style: normal; color: #999; }
.context .line { margin-top: 2px; border-top: 1px solid #d6d6d6; height: 9px; }
.context .hot { margin-top: 2px; background: #0a93d8; color: #fff; }

.viewbar { position: absolute; left: 212px; bottom: 3px; width: 112px; height: 11px; display: flex; align-items: center; justify-content: space-between; padding: 0 1px; background: #eee; }
.viewbar span { display: flex; align-items: center; }
.area { position: absolute; right: 8px; bottom: 4px; font-family: "Liberation Sans", sans-serif; font-size: 5px; font-weight: bold; color: #222; }

.timeline { flex: none; height: 23px; display: flex; align-items: center; gap: 5px; padding: 0 6px 0 5px; background: #f1f1f1; border-top: 1px solid #ccc; }
.feat { width: 26px; height: 18px; margin-left: 3px; }

.taskbar { flex: none; height: 23px; display: grid; grid-template-columns: 1fr auto 1fr; align-items: center; padding: 0 7px 0 9px; background: #202020; color: #e8e8e8; font-size: 6px; line-height: 8px; }
.weather { display: flex; align-items: center; gap: 5px; }
.weather span { color: #bbb; }
.apps { display: flex; align-items: center; gap: 9px; }
.apps svg { width: 12px; height: 12px; }
.run { position: relative; padding: 3px 0; background: linear-gradient(#999, #999) center bottom / 3px 1px no-repeat; }
.run b { position: absolute; top: 0; right: -2px; width: 7px; height: 7px; border-radius: 50%; background: #e0222c; color: #fff; font-size: 5px; line-height: 7px; text-align: center; }
.current { padding: 3px; margin: 0 -3px; background: #333; border-bottom: 1px solid #1d9bf0; }
.tray { display: flex; align-items: center; justify-content: flex-end; gap: 5px; }
.mid { text-align: center; margin: 0 4px; }
.status { display: flex; gap: 4px; }
.clock { text-align: right; }
.count { width: 8px; height: 8px; border-radius: 50%; background: #1590ea; font-size: 5px; text-align: center; }
```
